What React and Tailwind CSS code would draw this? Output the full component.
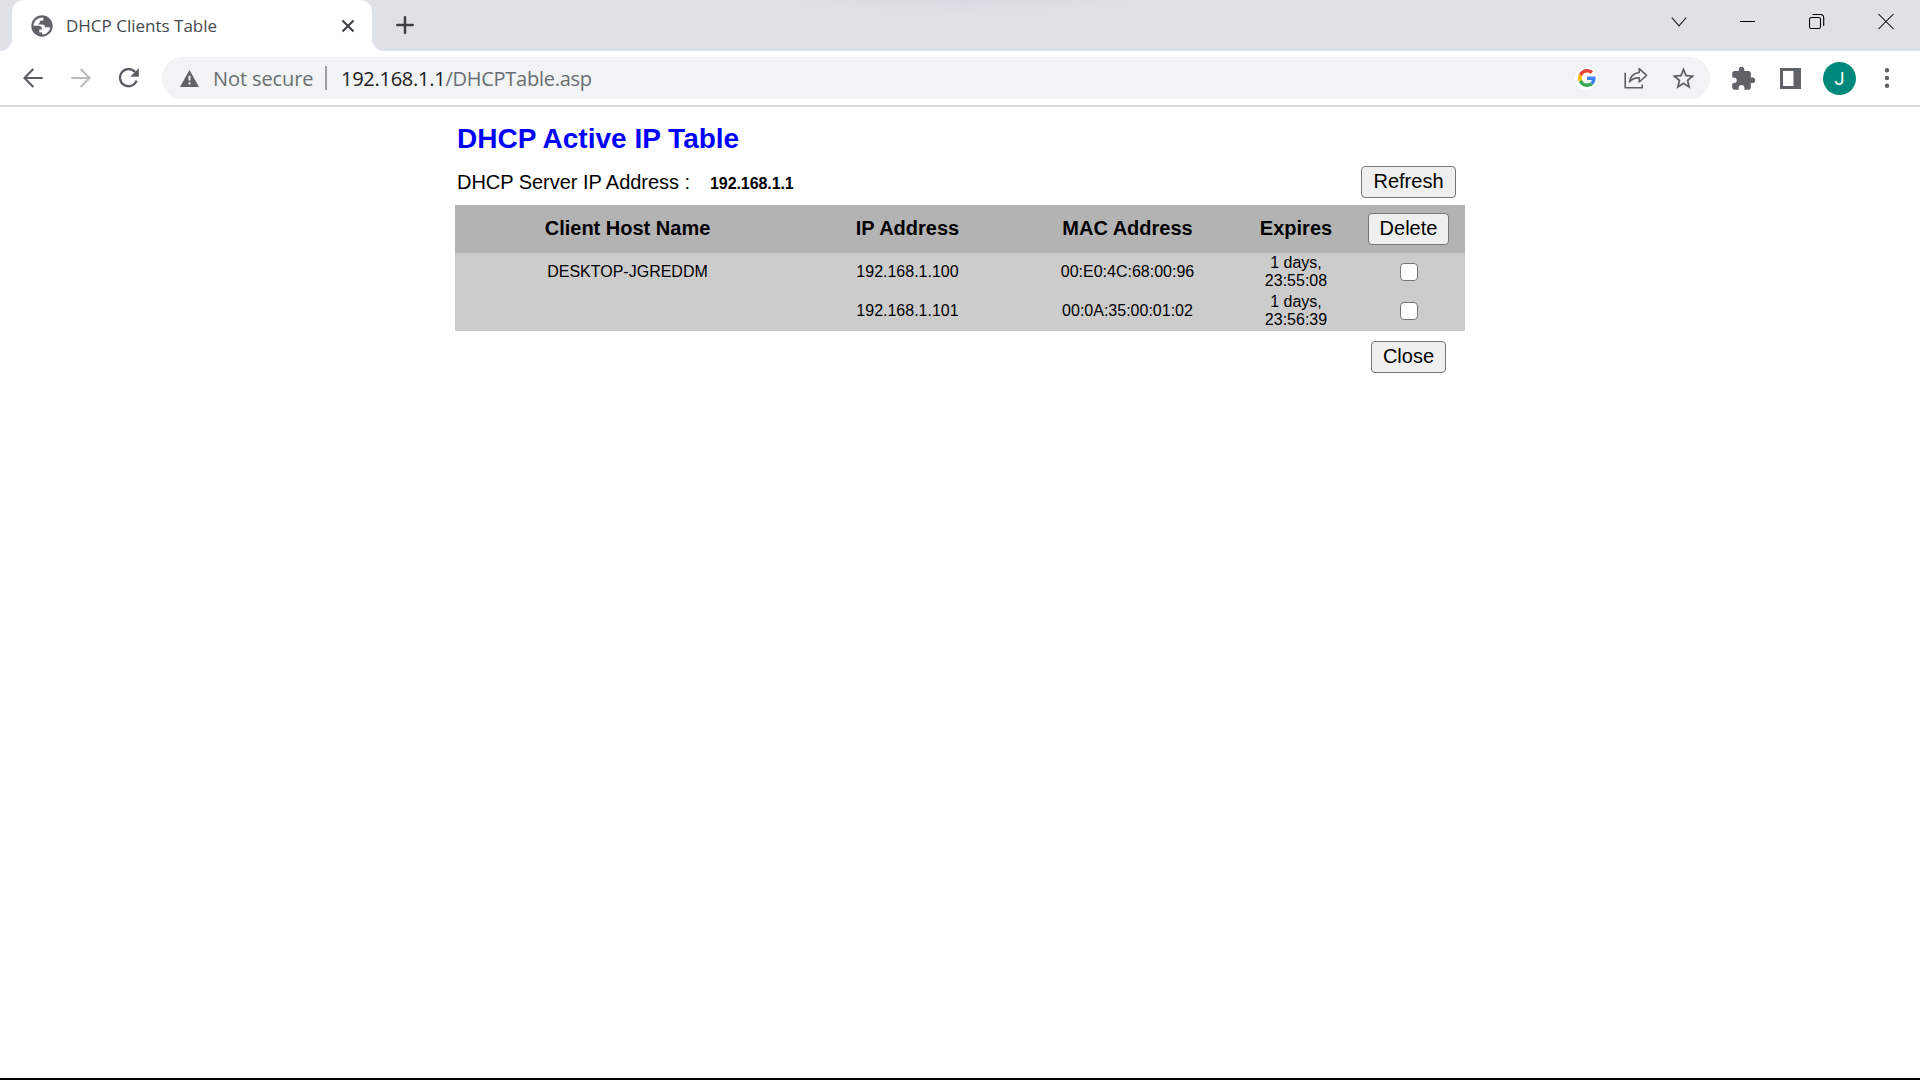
import React from "react";

const clients = [
  { host: "DESKTOP-JGREDDM", ip: "192.168.1.100", mac: "00:E0:4C:68:00:96", time: "23:55:08" },
  { host: "", ip: "192.168.1.101", mac: "00:0A:35:00:01:02", time: "23:56:39" },
];

function GlobeIcon() {
  return (
    <svg width="22" height="22" viewBox="0 0 22 22" fill="#5f6368">
      <circle cx="11" cy="11" r="10.7" />
      <circle cx="11" cy="11" r="8.6" fill="#fff" />
      <path d="M2 10.8H7.2C9.6 10.8 10.9 11.8 10.9 13.6V14.6H8.3V17.4H11V20.2C5.6 20 1.9 16 2 10.8Z" />
      <path d="M12.4 2.2V4.4C12.4 5.4 11.6 5.7 10.4 5.7H8.8V7.4C8.8 8 8.2 8.4 7.4 8.4V9.4H11.2C13.2 9.4 14 10.4 14 12.2H17C18.4 12.2 19.2 12.6 20 13.2C21 7.4 17.6 2.8 12.4 2.2Z" />
    </svg>
  );
}

function TabStrip() {
  return (
    <div className="flex h-[51px] bg-white">
      <div className="h-[51px] w-3 rounded-br-[12px] bg-[#dee1e6]" />
      <div className="h-[51px] w-[360px] bg-[linear-gradient(#dee1e6_50%,#fff_50%)]">
        <div className="flex h-full items-center rounded-t-[12px] bg-white pl-[19px] pr-[17px]">
          <GlobeIcon />
          <span className="ml-[13px] w-[155px] whitespace-nowrap font-['Open_Sans',sans-serif] text-[17px] leading-6 text-[#45494d]">
            DHCP Clients Table
          </span>
          <svg className="ml-auto" width="14" height="14" viewBox="0 0 14 14" stroke="#3c4043" strokeWidth="2.1">
            <path d="M1.5 1.5L12.5 12.5M12.5 1.5L1.5 12.5" />
          </svg>
        </div>
      </div>
      <div className="flex h-[51px] flex-1 rounded-bl-[12px] bg-[#dee1e6]">
        <svg className="ml-6 mt-4" width="18" height="18" viewBox="0 0 18 18" stroke="#3c4043" strokeWidth="2.5" strokeLinecap="round">
          <path d="M9 1.3V16.7M1.3 9H16.7" />
        </svg>
        <div className="ml-[370px] h-3 w-[360px] bg-[radial-gradient(ellipse_at_top,#d7dae0_0%,#dee1e6_70%)]" />
        <div className="ml-auto mt-[13px] flex h-[17px] items-center">
          <svg width="16" height="17" viewBox="0 0 16 17" fill="none" stroke="#222" strokeWidth="1.1">
            <path d="M0.8 4.6L8 12.8L15.2 4.6" />
          </svg>
          <svg className="ml-[53px]" width="15" height="17" viewBox="0 0 15 17">
            <path d="M0 8.5H15" stroke="#000" />
          </svg>
          <svg className="ml-[54px]" width="16" height="17" viewBox="0 0 16 17" fill="none" stroke="#000" strokeWidth="1.1">
            <rect x="0.5" y="4.5" width="11" height="11" rx="1.8" />
            <path d="M3.5 1.5H11.5C13.8 1.5 14.7 2.8 14.7 4.8V13" />
          </svg>
          <svg className="ml-[53px] mr-[26px]" width="16" height="17" viewBox="0 0 16 17" stroke="#000" strokeWidth="1.05">
            <path d="M0.5 1L15.5 16M15.5 1L0.5 16" />
          </svg>
        </div>
      </div>
    </div>
  );
}

function GoogleIcon() {
  return (
    <span className="flex size-[23px] items-center justify-center rounded-full bg-white">
      <svg width="18" height="18" viewBox="0 0 48 48">
        <path fill="#EA4335" d="M24 9.5c3.54 0 6.71 1.22 9.21 3.6l6.85-6.85C35.9 2.38 30.47 0 24 0 14.62 0 6.51 5.38 2.56 13.22l7.98 6.19C12.43 13.72 17.74 9.5 24 9.5z" />
        <path fill="#4285F4" d="M46.98 24.55c0-1.57-.15-3.09-.38-4.55H24v9.02h12.94c-.58 2.96-2.26 5.48-4.78 7.18l7.73 6c4.51-4.18 7.09-10.36 7.09-17.65z" />
        <path fill="#FBBC05" d="M10.53 28.59c-.48-1.45-.76-2.99-.76-4.59s.27-3.14.76-4.59l-7.98-6.19C.92 16.46 0 20.12 0 24c0 3.88.92 7.54 2.56 10.78l7.97-6.19z" />
        <path fill="#34A853" d="M24 48c6.48 0 11.93-2.13 15.89-5.81l-7.73-6c-2.15 1.45-4.92 2.3-8.16 2.3-6.26 0-11.57-4.22-13.47-9.91l-7.98 6.19C6.51 42.62 14.62 48 24 48z" />
      </svg>
    </span>
  );
}

function Toolbar() {
  return (
    <div className="flex h-[56px] items-center border-b-2 border-[#dadbdd] bg-white pl-[23px]">
      <svg width="20" height="20" viewBox="0 0 20 20" fill="none" stroke="#5a5e63" strokeWidth="2.1">
        <path d="M19.7 10H1.8M10.3 1L1.5 10L10.3 19" />
      </svg>
      <svg className="ml-7" width="20" height="20" viewBox="0 0 20 20" fill="none" stroke="#babcbe" strokeWidth="2.1">
        <path d="M0.3 10H18.2M9.7 1L18.5 10L9.7 19" />
      </svg>
      <svg className="ml-[27px]" width="22" height="20" viewBox="0 0 22 20" fill="none">
        <path d="M17.2 4.1A8.6 8.6 0 1 0 18.6 12.7" stroke="#5a5e63" strokeWidth="2.3" />
        <path d="M20.8 0.2V8.8H12.2Z" fill="#5a5e63" />
      </svg>
      <div className="ml-[22px] flex h-[42px] w-[1548px] items-center rounded-full bg-[#f1f3f4] pl-[18px] pr-[15px] font-['Open_Sans',sans-serif] text-[20px] leading-7 text-[#6a6e73]">
        <svg width="19" height="17" viewBox="0 0 19 17">
          <path d="M9.5 0L19 17H0Z" fill="#5f6368" />
          <path d="M9.5 5.8V10.6M9.5 12.2V14.4" stroke="#f1f3f4" strokeWidth="2" />
        </svg>
        <span className="ml-[14px] w-[101px] whitespace-nowrap pt-[2px] tracking-[-0.1px]">Not secure</span>
        <span className="ml-[11px] h-6 w-[2px] bg-[#9a9da1]" />
        <span className="ml-[14px] whitespace-nowrap pt-[2px] tracking-[-0.26px]">
          <span className="text-[#202124]">192.168.1.1</span>/DHCPTable.asp
        </span>
        <div className="ml-auto flex items-center">
          <GoogleIcon />
          <svg className="ml-[26px]" width="24" height="22" viewBox="0 0 24 22" fill="none" stroke="#5f6368" strokeWidth="1.6">
            <path d="M1.2 5.7V20.8H18.2V17.4" />
            <path d="M15.2 1.6L22.6 8.3L15.2 15V10.9C11 10.6 8 11.8 5.5 14.8C6.4 9.7 9.6 6.2 15.2 5.5Z" strokeLinejoin="round" />
          </svg>
          <svg className="ml-6" width="23" height="23" viewBox="1.8 1.8 20.4 20.4" fill="#5f6368">
            <path d="M22 9.24l-7.19-.62L12 2 9.19 8.63 2 9.24l5.46 4.73L5.82 21 12 17.27 18.18 21l-1.63-7.03L22 9.24zM12 15.4l-3.76 2.27 1-4.28-3.32-2.88 4.38-.38L12 6.1l1.71 4.04 4.38.38-3.32 2.88 1 4.28L12 15.4z" />
          </svg>
        </div>
      </div>
      <svg className="ml-[22px]" width="23" height="23" viewBox="1.8 1.3 21 21" fill="#5f6368">
        <path d="M20.5 11H19V7c0-1.1-.9-2-2-2h-4V3.5C13 2.12 11.88 1 10.5 1S8 2.12 8 3.5V5H4c-1.1 0-1.99.9-1.99 2v3.8H3.5c1.49 0 2.7 1.21 2.7 2.7s-1.21 2.7-2.7 2.7H2V20c0 1.1.9 2 2 2h3.8v-1.5c0-1.49 1.21-2.7 2.7-2.7 1.49 0 2.7 1.21 2.7 2.7V22H17c1.1 0 2-.9 2-2v-4h1.5c1.38 0 2.5-1.12 2.5-2.5S21.88 11 20.5 11z" />
      </svg>
      <svg className="ml-[25px]" width="21" height="21" viewBox="0 0 21 21">
        <path fillRule="evenodd" d="M0 0H21V21H0ZM3 3V18H13.5V3Z" fill="#5f6368" />
      </svg>
      <span className="ml-[22px] flex size-[33px] items-center justify-center rounded-full bg-[#00897b] pt-px font-[Roboto,sans-serif] text-[18px] leading-none text-white">
        J
      </span>
      <svg className="ml-[28px]" width="6" height="20" viewBox="0 0 6 20" fill="#5f6368">
        <circle cx="3" cy="2.3" r="2.2" />
        <circle cx="3" cy="10" r="2.2" />
        <circle cx="3" cy="17.7" r="2.2" />
      </svg>
    </div>
  );
}

function Button({ className, children }) {
  return (
    <button className={`block h-8 rounded-[4px] border border-[#767676] bg-[#efefef] pb-[2px] text-center text-[20px] leading-[28px] text-black ${className}`}>
      {children}
    </button>
  );
}

const grid = "grid grid-cols-[345px_215px_225px_112px_113px] justify-items-center text-center";

function DhcpPage() {
  return (
    <main className="mx-auto w-[1010px] font-['Liberation_Sans',Arial,sans-serif] text-black">
      <h1 className="ml-[2px] pt-4 text-[28px] font-bold leading-8 text-[#0000ff]">DHCP Active IP Table</h1>
      <div className="mt-[11px] flex h-[39px] pr-[9px]">
        <div className="ml-[2px] mt-1 flex h-6 items-baseline leading-6">
          <span className="w-[253px] whitespace-nowrap text-[20px] tracking-[-0.03px]">DHCP Server IP Address :</span>
          <b className="text-[16px] tracking-[-0.08px]">192.168.1.1</b>
        </div>
        <Button className="ml-auto w-[95px]">Refresh</Button>
      </div>
      <div className={`${grid} h-12 items-center bg-[#b3b3b3] text-[20px] font-bold leading-6`}>
        <span className="pb-[2px]">Client Host Name</span>
        <span className="pb-[2px]">IP Address</span>
        <span className="pb-[2px]">MAC Address</span>
        <span className="pb-[2px]">Expires</span>
        <Button className="w-[81px] font-normal">Delete</Button>
      </div>
      {clients.map((c) => (
        <div key={c.ip} className={`${grid} h-[39px] items-center bg-[#cccccc] pb-[2px] text-[16px] leading-[18px]`}>
          <span>{c.host}</span>
          <span>{c.ip}</span>
          <span>{c.mac}</span>
          <span>
            1 days,
            <br />
            {c.time}
          </span>
          <input type="checkbox" className="size-[18px] appearance-none rounded-[4px] border-[1.5px] border-[#767676] bg-white" />
        </div>
      ))}
      <div className="flex justify-end pr-[19px] pt-[10px]">
        <Button className="w-[75px]">Close</Button>
      </div>
    </main>
  );
}

export default function App() {
  return (
    <div className="flex h-[1080px] w-[1920px] flex-col overflow-hidden border-b-2 border-black bg-white">
      <TabStrip />
      <Toolbar />
      <DhcpPage />
    </div>
  );
}
